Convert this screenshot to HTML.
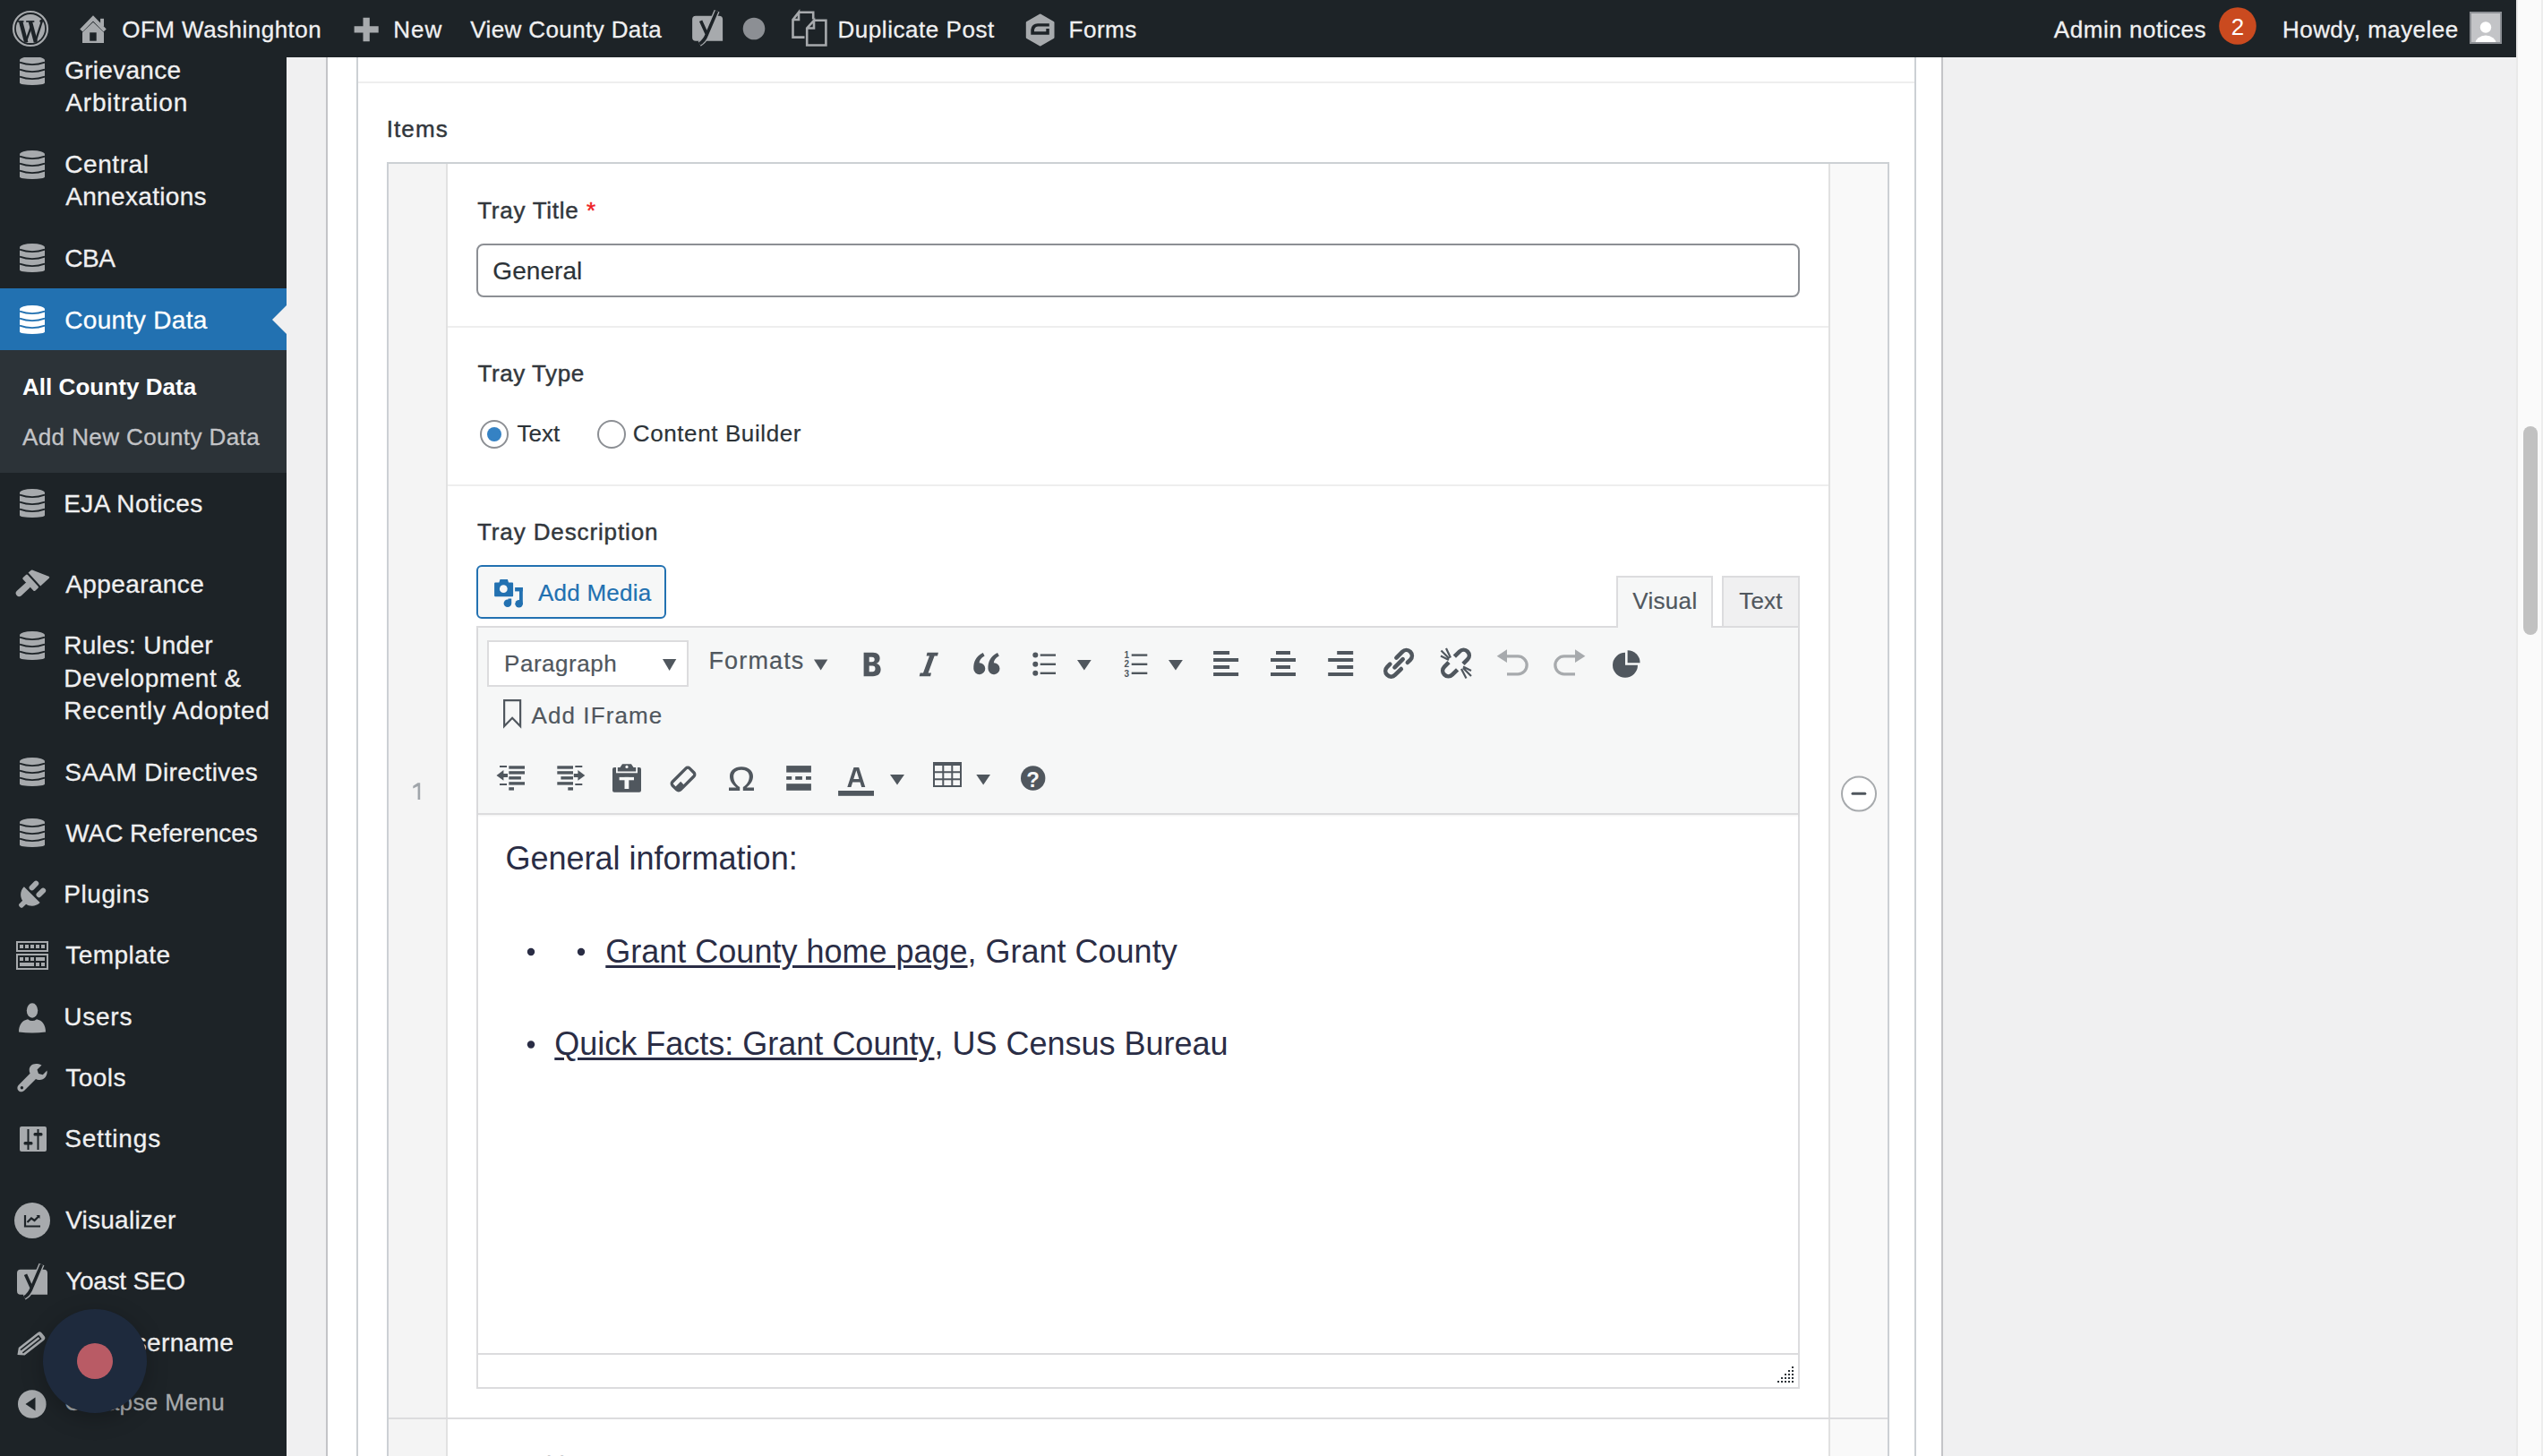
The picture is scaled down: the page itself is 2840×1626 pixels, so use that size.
<!DOCTYPE html>
<html><head><meta charset="utf-8">
<style>
html,body{margin:0;padding:0;}
body{width:2840px;height:1626px;overflow:hidden;position:relative;background:#f0f0f1;font-family:"Liberation Sans",sans-serif;}
.a{position:absolute;box-sizing:border-box;}
.t{position:absolute;white-space:nowrap;line-height:1;}
svg{position:absolute;overflow:visible;}
</style></head><body>
<!-- scrollbar -->
<div class="a" style="left:2810px;top:0;width:30px;height:1626px;background:#fafafa;border-left:2px solid #e9e9e9;border-right:2px solid #ededed"></div>
<div class="a" style="left:2818px;top:476px;width:16px;height:233px;border-radius:8px;background:#c1c1c1"></div>

<!-- postbox -->
<div class="a" style="left:364px;top:0;width:1806px;height:1626px;background:#fff;border-left:2px solid #c3c4c7;border-right:2px solid #c3c4c7"></div>
<!-- layout borders -->
<div class="a" style="left:398px;top:0;width:1742px;height:1626px;border-left:2px solid #ccd0d4;border-right:2px solid #ccd0d4"></div>
<!-- items field border-top -->
<div class="a" style="left:400px;top:91px;width:1738px;height:2px;background:#eeeeee"></div>
<!-- repeater table -->
<div class="a" style="left:432px;top:181px;width:1678px;height:1500px;border:2px solid #ccd0d4;background:#fff"></div>
<div class="a" style="left:434px;top:183px;width:64px;height:1500px;background:#f4f4f4;border-right:2px solid #e1e1e1;width:66px"></div>
<div class="a" style="left:2042px;top:183px;width:66px;height:1500px;background:#f9f9f9;border-left:2px solid #e1e1e1"></div>
<!-- row separator -->
<div class="a" style="left:434px;top:1583px;width:1674px;height:2px;background:#dcdcde"></div>
<!-- field separators -->
<div class="a" style="left:500px;top:364px;width:1542px;height:2px;background:#eeeeee"></div>
<div class="a" style="left:500px;top:541px;width:1542px;height:2px;background:#eeeeee"></div>

<!-- input -->
<div class="a" style="left:532px;top:272px;width:1478px;height:60px;border:2px solid #8c8f94;border-radius:8px;background:#fff"></div>

<!-- radios -->
<div class="a" style="left:536px;top:469px;width:32px;height:32px;border:2px solid #8c8f94;border-radius:50%;background:#fff"></div>
<div class="a" style="left:544px;top:477px;width:16px;height:16px;border-radius:50%;background:#3582c4"></div>
<div class="a" style="left:667px;top:469px;width:32px;height:32px;border:2px solid #8c8f94;border-radius:50%;background:#fff"></div>

<!-- add media button -->
<div class="a" style="left:532px;top:631px;width:212px;height:60px;border:2px solid #2271b1;border-radius:6px;background:#f6f7f7"></div>

<!-- editor tabs -->
<div class="a" style="left:1805px;top:643px;width:108px;height:60px;border:2px solid #dcdcde;border-bottom:0;background:#f6f7f7"></div>
<div class="a" style="left:1923px;top:643px;width:87px;height:58px;border:2px solid #dcdcde;border-bottom:0;background:#f0f0f1"></div>
<!-- editor container -->
<div class="a" style="left:532px;top:699px;width:1478px;height:852px;border:2px solid #dcdcde;background:#fff"></div>
<div class="a" style="left:534px;top:701px;width:1474px;height:209px;background:#f6f7f7;border-bottom:2px solid #dcdcde;box-shadow:0 1px 2px rgba(0,0,0,.06)"></div>
<div class="a" style="left:1807px;top:699px;width:104px;height:4px;background:#f6f7f7"></div>
<!-- paragraph select -->
<div class="a" style="left:544px;top:715px;width:225px;height:52px;border:2px solid #dcdcde;background:#fff"></div>
<!-- status bar -->
<div class="a" style="left:534px;top:1511px;width:1474px;height:2px;background:#dcdcde"></div>

<svg style="left:548px;top:642px" width="40" height="40" viewBox="548 642 40 40"><g fill="#2271b1"><path d="M552.1,651.5Q552.1,650.5 553.1,650.5H557.4L558.5,647.1H566.9L568,650.5H572.1Q573.1,650.5 573.1,651.5V665.3Q573.1,666.3 572.1,666.3H553.1Q552.1,666.3 552.1,665.3Z"/><rect x="575.1" y="656" width="8.7" height="4.4"/><rect x="580" y="656" width="3.8" height="19"/><circle cx="579.6" cy="674.3" r="4.3"/><circle cx="566.9" cy="673.7" r="4.3"/><rect x="567.5" y="668.5" width="3.7" height="5"/></g><circle cx="562.3" cy="657.7" r="4.4" fill="#f6f7f7"/></svg>
<svg style="left:0px;top:0px" width="2840" height="1626" viewBox="0 0 2840 1626"><path fill="#50575e" d="M740,736H755.3L747.65,749Z"/><path fill="#50575e" d="M909,736.5H924.3L916.65,748.5Z"/><path fill="#50575e" fill-rule="evenodd" d="M964.6,728.8H975C980.5,728.8 982.6,731.8 982.6,735.3C982.6,738.3 981,740.3 978.5,740.9C981.8,741.4 983.6,744 983.6,747.6C983.6,752.5 980.5,755.2 975,755.2H964.6ZM970.7,733.8V739.3H973.8C975.8,739.3 976.7,738.3 976.7,736.6C976.7,734.8 975.8,733.8 973.8,733.8ZM970.7,743.5V750.2H974.3C976.4,750.2 977.5,749.1 977.5,746.8C977.5,744.6 976.4,743.5 974.3,743.5Z"/><path fill="#50575e" d="M1035.5,728.8H1047.9L1047,732.5H1043.6L1036.6,751.5H1040L1039.1,755.2H1026.7L1027.6,751.5H1031L1038,732.5H1034.6Z"/><path fill="#50575e" d="M1087.3,747 C1087,739 1090,733 1097.8,729.1 L1099.6,732.4 C1095.5,734.8 1093.8,737.2 1093.6,740.2 A6.5,6.5 0 1 1 1087.3,747 Z"/><path fill="#50575e" d="M1103.5,747 C1103.2,739 1106.2,733 1114.0,729.1 L1115.8,732.4 C1111.7,734.8 1110.0,737.2 1109.8,740.2 A6.5,6.5 0 1 1 1103.5,747 Z"/><g fill="#50575e"><circle cx="1156.3" cy="731.6" r="3"/><circle cx="1156.3" cy="741.8" r="3"/><circle cx="1156.3" cy="751.8" r="3"/><rect x="1161.7" y="730.4" width="17.3" height="2.4"/><rect x="1161.7" y="740.6" width="17.3" height="2.4"/><rect x="1161.7" y="750.6" width="17.3" height="2.4"/></g><path fill="#50575e" d="M1203,737H1218.7L1210.85,748.4Z"/><g fill="#50575e"><rect x="1263.7" y="730.4" width="17.6" height="2.4"/><rect x="1263.7" y="740.6" width="17.6" height="2.4"/><rect x="1263.7" y="750.6" width="17.6" height="2.4"/></g><g font-family="Liberation Sans" font-size="10" font-weight="bold" fill="#50575e"><text x="1255.5" y="735">1</text><text x="1255.5" y="745.3">2</text><text x="1255.5" y="755.5">3</text></g><path fill="#50575e" d="M1305,737H1320.9L1312.95,748.4Z"/><g fill="#50575e"><rect x="1355.1" y="727" width="18" height="4"/><rect x="1355.1" y="735" width="28" height="4"/><rect x="1355.1" y="743" width="18" height="4"/><rect x="1355.1" y="751" width="28" height="4"/></g><g fill="#50575e"><rect x="1425" y="727" width="16" height="4"/><rect x="1419" y="735" width="28" height="4"/><rect x="1425" y="743" width="16" height="4"/><rect x="1419" y="751" width="28" height="4"/></g><g fill="#50575e"><rect x="1493.2" y="727" width="18" height="4"/><rect x="1483.2" y="735" width="28" height="4"/><rect x="1493.2" y="743" width="18" height="4"/><rect x="1483.2" y="751" width="28" height="4"/></g><g transform="translate(1562.1,740.8) rotate(-45)" fill="none" stroke="#50575e" stroke-width="4.6" stroke-linecap="round"><path d="M2.5,-6.3H12A6.3,6.3 0 0 1 12,6.3H7.5"/><path d="M-2.5,6.3H-12A6.3,6.3 0 0 1 -12,-6.3H-7.5"/><path d="M-6.5,0H6.5"/></g><g transform="translate(1626,740.5) rotate(-45)" fill="none" stroke="#50575e" stroke-width="4.6" stroke-linecap="butt"><path d="M4,-6.3H12A6.3,6.3 0 0 1 12,6.3H5"/><path d="M-4,6.3H-12A6.3,6.3 0 0 1 -12,-6.3H-5"/></g><g stroke="#50575e" stroke-width="2.2"><path d="M1609.5,726.5L1618.5,735.5M1615,724L1620,734.5M1609,732.5L1618,737M1643,755L1634,746M1637.5,757.5L1632,747M1643,749L1634,744.5"/></g><g fill="none" stroke="#a7aaad" stroke-width="3.3"><path d="M1682,732.9H1695.2A9.9,9.9 0 0 1 1695.2,752.8H1683"/><path d="M1760,732.9H1746.8A9.9,9.9 0 0 0 1746.8,752.8H1759"/></g><g fill="#a7aaad"><path d="M1671.7,732.7L1683,725.3V740.1Z"/><path d="M1770.4,732.7L1759,725.3V740.1Z"/></g><g fill="#50575e"><path d="M1815,742.8V728.8A14,14 0 1 0 1829,742.8Z"/><path d="M1817.6,740.2V726.2A14,14 0 0 1 1831.6,740.2Z"/></g><path fill="none" stroke="#50575e" stroke-width="2.2" d="M563.1,782.2H581.1V811L572.1,801.8L563.1,811Z"/><g fill="#50575e"><rect x="558.0" y="855" width="8" height="2"/><rect x="568.3" y="855.3" width="17.7" height="3.4"/><rect x="568.3" y="861.2" width="17.7" height="3.4"/><rect x="568.3" y="867.1" width="13.6" height="3.4"/><rect x="568.3" y="873.2" width="17.7" height="3.4"/><rect x="558.0" y="875" width="8" height="2"/><rect x="568.3" y="879.2" width="5.7" height="3.4"/><path d="M554.5,865.9L562.4,860V863.9H567.0V867.9H562.4V871.8Z"/></g><g fill="#50575e"><rect x="622.3" y="855.3" width="17.7" height="3.4"/><rect x="622.3" y="861.2" width="17.7" height="3.4"/><rect x="626.4" y="867.1" width="13.6" height="3.4"/><rect x="622.3" y="873.2" width="17.7" height="3.4"/><rect x="642.3" y="855" width="8" height="2"/><rect x="642.3" y="875" width="8" height="2"/><rect x="634.3" y="879.2" width="5.7" height="3.4"/><path d="M653.3,865.9L645.4,860V863.9H640.8V867.9H645.4V871.8Z"/></g><path fill="#50575e" d="M686,857H692.5L695,853.2H705L707.5,857H714Q716,857 716,859V882.8Q716,884.8 714,884.8H686Q684,884.8 684,882.8V859Q684,857 686,857Z"/><g fill="#f6f7f7"><rect x="688" y="861.5" width="24" height="1.8"/><rect x="688" y="857" width="1.8" height="5.5"/><rect x="710.2" y="857" width="1.8" height="5.5"/><circle cx="700" cy="856.4" r="1.6"/><rect x="691.6" y="867.9" width="16.4" height="3.4"/><rect x="697.5" y="867.9" width="4.8" height="13.1"/></g><g transform="translate(763,870) rotate(-45)"><rect x="-13.5" y="-6.3" width="27" height="12.6" rx="3" fill="none" stroke="#50575e" stroke-width="3.4"/><path d="M-13.5,0H-4V6.3H-10.5Q-13.5,6.3 -13.5,3.3Z" fill="#50575e"/></g><path fill="#50575e" d="M814,883V879.4H822.3C817.3,876 815,871.5 815,866.8C815,860.5 820.3,856.2 828,856.2C835.7,856.2 841,860.5 841,866.8C841,871.5 838.7,876 833.7,879.4H842V883H829.8V879C834,876.3 836.8,872.3 836.8,867.3C836.8,862.7 833.4,859.8 828,859.8C822.6,859.8 819.2,862.7 819.2,867.3C819.2,872.3 822,876.3 826.2,879V883Z"/><g fill="#50575e"><rect x="878.2" y="855.1" width="27.7" height="7.5"/><rect x="878.2" y="867" width="6" height="3.8"/><rect x="888.2" y="867" width="7.7" height="3.8"/><rect x="900" y="867" width="5.9" height="3.8"/><rect x="878.2" y="875.2" width="27.7" height="7.6"/></g><path fill="#50575e" d="M953.5,857H959.2L966.3,879H962.2L960.5,873.5H952.2L950.5,879H946.3ZM953.3,869.9H959.4L956.35,860.3Z"/><rect x="936.1" y="883" width="39.9" height="5.8" fill="#50575e"/><path fill="#50575e" d="M994,865H1010L1002.0,876.5Z"/><g fill="none" stroke="#50575e" stroke-width="2"><rect x="1043" y="852" width="30" height="26"/><path d="M1053.3,855V878M1063.3,855V878M1043,862.2H1073M1043,870.2H1073"/></g><rect x="1042" y="851" width="32" height="4" fill="#50575e"/><path fill="#50575e" d="M1090.3,865H1106L1098.15,876.5Z"/><circle cx="1153.7" cy="869" r="13.7" fill="#50575e"/><text x="1153.7" y="878.5" text-anchor="middle" font-family="Liberation Sans" font-weight="bold" font-size="24" fill="#f6f7f7">?</text><g fill="#2c3338"><rect x="2001" y="1526" width="2" height="2"/><rect x="1997" y="1530" width="2" height="2"/><rect x="2001" y="1530" width="2" height="2"/><rect x="1993" y="1534" width="2" height="2"/><rect x="1997" y="1534" width="2" height="2"/><rect x="2001" y="1534" width="2" height="2"/><rect x="1989" y="1538" width="2" height="2"/><rect x="1993" y="1538" width="2" height="2"/><rect x="1997" y="1538" width="2" height="2"/><rect x="2001" y="1538" width="2" height="2"/><rect x="1985" y="1542" width="2" height="2"/><rect x="1989" y="1542" width="2" height="2"/><rect x="1993" y="1542" width="2" height="2"/><rect x="1997" y="1542" width="2" height="2"/><rect x="2001" y="1542" width="2" height="2"/></g><circle cx="2076" cy="886.6" r="19" fill="#fff" stroke="#a7aaad" stroke-width="2"/><rect x="2067.5" y="884.7" width="16.8" height="3" rx="1.5" fill="#50575e"/><path fill="#a0a5aa" d="M466.6,874.3H469.2V892.9H466.6V877.9L461.3,880.6V877.8Z"/><g fill="#2a2d45"><circle cx="593" cy="1063" r="4.2"/><circle cx="649" cy="1063" r="4.2"/><circle cx="593" cy="1166.5" r="4.2"/></g></svg>
<div class="t" style="left:431.75px;top:130.80px;font-size:26px;color:#32373c;letter-spacing:1.08px;-webkit-text-stroke:0.45px currentColor;">Items</div>
<div class="t" style="left:533.20px;top:221.50px;font-size:26px;color:#32373c;letter-spacing:0.73px;-webkit-text-stroke:0.45px currentColor;">Tray Title</div>
<div class="t" style="left:655.00px;top:221.50px;font-size:26px;color:#ee1c25;-webkit-text-stroke:0.45px currentColor;">*</div>
<div class="t" style="left:550.30px;top:288.50px;font-size:28px;color:#2c3338;letter-spacing:0.07px;-webkit-text-stroke:0.2px currentColor;">General</div>
<div class="t" style="left:533.40px;top:404.20px;font-size:26px;color:#32373c;letter-spacing:0.58px;-webkit-text-stroke:0.45px currentColor;">Tray Type</div>
<div class="t" style="left:577.50px;top:471.20px;font-size:26px;color:#2c3338;letter-spacing:0.01px;-webkit-text-stroke:0.2px currentColor;">Text</div>
<div class="t" style="left:706.80px;top:471.20px;font-size:26px;color:#2c3338;letter-spacing:0.60px;-webkit-text-stroke:0.2px currentColor;">Content Builder</div>
<div class="t" style="left:533.00px;top:581.00px;font-size:26px;color:#32373c;letter-spacing:0.88px;-webkit-text-stroke:0.45px currentColor;">Tray Description</div>
<div class="t" style="left:601.00px;top:649.40px;font-size:26px;color:#2271b1;letter-spacing:0.23px;-webkit-text-stroke:0.2px currentColor;">Add Media</div>
<div class="t" style="left:1823.20px;top:658.00px;font-size:26px;color:#50575e;letter-spacing:0.33px;-webkit-text-stroke:0.2px currentColor;">Visual</div>
<div class="t" style="left:1942.30px;top:658.00px;font-size:26px;color:#50575e;letter-spacing:0.18px;-webkit-text-stroke:0.2px currentColor;">Text</div>
<div class="t" style="left:563.10px;top:727.80px;font-size:26px;color:#50575e;letter-spacing:0.51px;-webkit-text-stroke:0.2px currentColor;">Paragraph</div>
<div class="t" style="left:791.50px;top:725.10px;font-size:27px;color:#50575e;letter-spacing:1.13px;-webkit-text-stroke:0.2px currentColor;">Formats</div>
<div class="t" style="left:593.50px;top:786.00px;font-size:26px;color:#50575e;letter-spacing:1.09px;-webkit-text-stroke:0.2px currentColor;">Add IFrame</div>
<div class="t" style="left:533.20px;top:1623.00px;font-size:26px;color:#32373c;letter-spacing:0.73px;-webkit-text-stroke:0.45px currentColor;">Tray Title</div>
<div class="t" style="left:564.50px;top:940.50px;font-size:36px;color:#2a2d45;">General information:</div>
<div class="t" style="left:676.30px;top:1044.50px;font-size:36px;color:#2a2d45;text-decoration:underline;text-decoration-thickness:3px;text-underline-offset:3px;">Grant County home page</div>
<div class="t" style="left:1080.54px;top:1044.50px;font-size:36px;color:#2a2d45;">, Grant County</div>
<div class="t" style="left:619.30px;top:1148.00px;font-size:36px;color:#2a2d45;text-decoration:underline;text-decoration-thickness:3px;text-underline-offset:3px;">Quick Facts: Grant County</div>
<div class="t" style="left:1043.44px;top:1148.00px;font-size:36px;color:#2a2d45;">, US Census Bureau</div>
<!-- ============ SIDEBAR ============ -->
<div class="a" style="left:0;top:64px;width:320px;height:1562px;background:#1d2327"></div>
<div class="a" style="left:0;top:322px;width:320px;height:69px;background:#2271b1"></div>
<div class="a" style="left:0;top:391px;width:320px;height:137px;background:#2c3338"></div>
<svg style="left:304px;top:341px" width="16" height="32" viewBox="0 0 16 32"><path d="M16 0L0 16L16 32Z" fill="#f0f0f1"/></svg>

<svg style="left:22px;top:62.6px" width="28" height="32" viewBox="0 0 28 32"><path fill="#a7aaad" d="M0 4.5A14 4.5 0 0 1 28 4.5V29.5A14 2.6 0 0 1 0 29.5Z"/><path fill="none" stroke="#1d2327" stroke-width="1.7" d="M0 6.6Q14 11.6 28 6.6M0 14.6Q14 19.6 28 14.6M0 22.6Q14 27.6 28 22.6"/></svg>
<svg style="left:22px;top:167.7px" width="28" height="32" viewBox="0 0 28 32"><path fill="#a7aaad" d="M0 4.5A14 4.5 0 0 1 28 4.5V29.5A14 2.6 0 0 1 0 29.5Z"/><path fill="none" stroke="#1d2327" stroke-width="1.7" d="M0 6.6Q14 11.6 28 6.6M0 14.6Q14 19.6 28 14.6M0 22.6Q14 27.6 28 22.6"/></svg>
<svg style="left:22px;top:272.2px" width="28" height="32" viewBox="0 0 28 32"><path fill="#a7aaad" d="M0 4.5A14 4.5 0 0 1 28 4.5V29.5A14 2.6 0 0 1 0 29.5Z"/><path fill="none" stroke="#1d2327" stroke-width="1.7" d="M0 6.6Q14 11.6 28 6.6M0 14.6Q14 19.6 28 14.6M0 22.6Q14 27.6 28 22.6"/></svg>
<svg style="left:22px;top:546.2px" width="28" height="32" viewBox="0 0 28 32"><path fill="#a7aaad" d="M0 4.5A14 4.5 0 0 1 28 4.5V29.5A14 2.6 0 0 1 0 29.5Z"/><path fill="none" stroke="#1d2327" stroke-width="1.7" d="M0 6.6Q14 11.6 28 6.6M0 14.6Q14 19.6 28 14.6M0 22.6Q14 27.6 28 22.6"/></svg>
<svg style="left:22px;top:704.9px" width="28" height="32" viewBox="0 0 28 32"><path fill="#a7aaad" d="M0 4.5A14 4.5 0 0 1 28 4.5V29.5A14 2.6 0 0 1 0 29.5Z"/><path fill="none" stroke="#1d2327" stroke-width="1.7" d="M0 6.6Q14 11.6 28 6.6M0 14.6Q14 19.6 28 14.6M0 22.6Q14 27.6 28 22.6"/></svg>
<svg style="left:22px;top:846.3px" width="28" height="32" viewBox="0 0 28 32"><path fill="#a7aaad" d="M0 4.5A14 4.5 0 0 1 28 4.5V29.5A14 2.6 0 0 1 0 29.5Z"/><path fill="none" stroke="#1d2327" stroke-width="1.7" d="M0 6.6Q14 11.6 28 6.6M0 14.6Q14 19.6 28 14.6M0 22.6Q14 27.6 28 22.6"/></svg>
<svg style="left:22px;top:914px" width="28" height="32" viewBox="0 0 28 32"><path fill="#a7aaad" d="M0 4.5A14 4.5 0 0 1 28 4.5V29.5A14 2.6 0 0 1 0 29.5Z"/><path fill="none" stroke="#1d2327" stroke-width="1.7" d="M0 6.6Q14 11.6 28 6.6M0 14.6Q14 19.6 28 14.6M0 22.6Q14 27.6 28 22.6"/></svg>
<svg style="left:22px;top:340.7px" width="28" height="32" viewBox="0 0 28 32"><path fill="#ffffff" d="M0 4.5A14 4.5 0 0 1 28 4.5V29.5A14 2.6 0 0 1 0 29.5Z"/><path fill="none" stroke="#2271b1" stroke-width="1.7" d="M0 6.6Q14 11.6 28 6.6M0 14.6Q14 19.6 28 14.6M0 22.6Q14 27.6 28 22.6"/></svg>
<svg style="left:12px;top:630px" width="50" height="42" viewBox="12 630 50 42"><g transform="translate(37.5,647.7) rotate(47.5)" fill="#a7aaad"><path d="M-10,-1.1V-4.3Q-10,-6.6 -7.4,-7.3L8.6,-15.3Q10.2,-15.8 10.2,-14V-1.1Z"/><rect x="-10" y="1" width="20" height="7.2" rx="1.4"/><rect x="-3.6" y="6" width="7.2" height="19.5" rx="3.6"/></g></svg>
<svg style="left:14px;top:978px" width="44" height="42" viewBox="14 978 44 42"><g transform="translate(36.75,998.1) rotate(45)" fill="#a7aaad"><path d="M-12.6,1.4H12.6C12.6,9 6.5,13 2.8,13.6V19.5Q0,22 -2.8,19.5V13.6C-6.5,13 -12.6,9 -12.6,1.4Z"/><rect x="-8.6" y="-13.5" width="6" height="12.5" rx="3"/><rect x="2.6" y="-13.5" width="6" height="12.5" rx="3"/></g></svg>
<svg style="left:14px;top:1046px" width="44" height="42" viewBox="14 1046 44 42"><g fill="none" stroke="#a7aaad" stroke-width="2"><rect x="19" y="1052" width="34" height="10"/><rect x="19" y="1066" width="34" height="16"/></g><g fill="#a7aaad"><rect x="22" y="1055" width="4" height="4"/><rect x="28" y="1055" width="4" height="4"/><rect x="34" y="1055" width="4" height="4"/><rect x="40" y="1055" width="4" height="4"/><rect x="46" y="1055" width="4" height="4"/><rect x="22" y="1069" width="4" height="4"/><rect x="28" y="1069" width="4" height="4"/><rect x="34" y="1069" width="4" height="4"/><rect x="40" y="1069" width="10" height="4"/><rect x="22" y="1075" width="16" height="4"/><rect x="46" y="1075" width="4" height="4"/><rect x="40" y="1075" width="4" height="4"/></g></svg>
<svg style="left:14px;top:1116px" width="44" height="40" viewBox="14 1116 44 40"><g fill="#a7aaad"><ellipse cx="36" cy="1128.5" rx="6.2" ry="8.3"/><path d="M21,1152.5C21,1144 25,1139.5 31,1138.2Q36,1142 41,1138.2C47,1139.5 51,1144 51,1152.5Q36,1154.5 21,1152.5Z"/></g></svg>
<svg style="left:14px;top:1184px" width="44" height="40" viewBox="14 1184 44 40"><g fill="#a7aaad"><path d="M46.5,1189.5L41.5,1194.5L43,1199L47.8,1200.2L52.5,1195.5C53.5,1201.5 49,1206.5 43.5,1206C42.2,1205.9 41,1205.5 40,1205L27.5,1217.5C25.5,1219.8 22.2,1219.8 20.6,1218C18.8,1216.2 19,1213.2 21,1211.4L33.6,1198.8C33,1197.6 32.7,1196.4 32.7,1195C32.7,1189.3 38.5,1186 46.5,1189.5Z"/></g><circle cx="24.4" cy="1214.8" r="1.7" fill="#1d2327"/></svg>
<svg style="left:14px;top:1254px" width="44" height="36" viewBox="14 1254 44 36"><rect x="22" y="1258" width="30" height="28" rx="2" fill="#a7aaad"/><g fill="#1d2327"><rect x="30.5" y="1261" width="2" height="23"/><rect x="41.5" y="1261" width="2" height="23"/><rect x="26.5" y="1275" width="10" height="3.5" rx="1.5"/><rect x="37.5" y="1265" width="10" height="3.5" rx="1.5"/></g></svg>
<svg style="left:14px;top:1341px" width="44" height="44" viewBox="14 1341 44 44"><circle cx="36" cy="1363" r="20" fill="#a7aaad"/><g fill="none" stroke="#1d2327" stroke-width="2.2"><path d="M28,1357V1369.5H45"/><path d="M30.5,1365L35,1360.5L38.5,1363L43.5,1358"/></g><path d="M40.5,1357H44.5V1361Z" fill="#1d2327"/></svg>
<svg style="left:12px;top:1404px" width="48" height="52" viewBox="12 1404 48 52"><g transform="translate(-754.1,1399.9)"><path fill="#a7aaad" d="M777,17.8H803.1Q807.1,17.8 807.1,21.8V45.8H777Q773.1,45.8 773.1,41.8V21.8Q773.1,17.8 777,17.8Z"/><path fill="none" stroke="#a7aaad" stroke-width="6.4" d="M800.6,12.2L789.6,38Q786.6,46 781.2,48.8"/><path fill="none" stroke="#1d2327" stroke-width="3.6" d="M800.6,12.2L789.6,38Q786.6,46 781.2,48.8M782.6,23.3L789.2,37.8"/></g></svg>
<svg style="left:14px;top:1482px" width="44" height="36" viewBox="14 1482 44 36"><g transform="translate(36,1500) rotate(-38)"><path fill="#a7aaad" d="M-15,-5.5H12Q15.5,-5.5 15.5,-2V2Q15.5,5.5 12,5.5H-15L-21,0Z"/><path fill="none" stroke="#1d2327" stroke-width="1.6" d="M-15,-2H10.5V2H-15"/></g></svg>
<svg style="left:14px;top:1548px" width="44" height="40" viewBox="14 1548 44 40"><circle cx="35.8" cy="1568" r="15.8" fill="#a7aaad"/><path d="M28.5,1568L39.5,1560.5V1575.5Z" fill="#1d2327"/></svg>
<div class="t" style="left:72.20px;top:65.10px;font-size:28px;color:#f0f0f1;letter-spacing:0.28px;-webkit-text-stroke:0.3px currentColor;">Grievance</div>
<div class="t" style="left:73.20px;top:101.30px;font-size:28px;color:#f0f0f1;letter-spacing:0.85px;-webkit-text-stroke:0.3px currentColor;">Arbitration</div>
<div class="t" style="left:72.20px;top:170.20px;font-size:28px;color:#f0f0f1;letter-spacing:0.58px;-webkit-text-stroke:0.3px currentColor;">Central</div>
<div class="t" style="left:73.20px;top:206.20px;font-size:28px;color:#f0f0f1;letter-spacing:0.33px;-webkit-text-stroke:0.3px currentColor;">Annexations</div>
<div class="t" style="left:72.20px;top:274.70px;font-size:28px;color:#f0f0f1;letter-spacing:-0.45px;-webkit-text-stroke:0.3px currentColor;">CBA</div>
<div class="t" style="left:72.20px;top:343.50px;font-size:28px;color:#ffffff;letter-spacing:0.35px;-webkit-text-stroke:0.3px currentColor;">County Data</div>
<div class="t" style="left:25.00px;top:419.00px;font-size:26px;color:#ffffff;font-weight:700;letter-spacing:0.04px;">All County Data</div>
<div class="t" style="left:25.00px;top:475.30px;font-size:26px;color:#c3c4c7;letter-spacing:0.41px;-webkit-text-stroke:0.3px currentColor;">Add New County Data</div>
<div class="t" style="left:71.20px;top:548.70px;font-size:28px;color:#f0f0f1;letter-spacing:0.40px;-webkit-text-stroke:0.3px currentColor;">EJA Notices</div>
<div class="t" style="left:73.20px;top:639.40px;font-size:28px;color:#f0f0f1;letter-spacing:0.40px;-webkit-text-stroke:0.3px currentColor;">Appearance</div>
<div class="t" style="left:71.20px;top:707.40px;font-size:28px;color:#f0f0f1;letter-spacing:0.27px;-webkit-text-stroke:0.3px currentColor;">Rules: Under</div>
<div class="t" style="left:71.20px;top:743.50px;font-size:28px;color:#f0f0f1;letter-spacing:0.55px;-webkit-text-stroke:0.3px currentColor;">Development &amp;</div>
<div class="t" style="left:71.20px;top:779.50px;font-size:28px;color:#f0f0f1;letter-spacing:0.68px;-webkit-text-stroke:0.3px currentColor;">Recently Adopted</div>
<div class="t" style="left:72.20px;top:848.80px;font-size:28px;color:#f0f0f1;letter-spacing:0.39px;-webkit-text-stroke:0.3px currentColor;">SAAM Directives</div>
<div class="t" style="left:73.20px;top:916.50px;font-size:28px;color:#f0f0f1;letter-spacing:-0.06px;-webkit-text-stroke:0.3px currentColor;">WAC References</div>
<div class="t" style="left:71.20px;top:985.20px;font-size:28px;color:#f0f0f1;letter-spacing:0.59px;-webkit-text-stroke:0.3px currentColor;">Plugins</div>
<div class="t" style="left:73.20px;top:1053.10px;font-size:28px;color:#f0f0f1;letter-spacing:0.48px;-webkit-text-stroke:0.3px currentColor;">Template</div>
<div class="t" style="left:71.20px;top:1121.90px;font-size:28px;color:#f0f0f1;letter-spacing:0.77px;-webkit-text-stroke:0.3px currentColor;">Users</div>
<div class="t" style="left:73.20px;top:1189.70px;font-size:28px;color:#f0f0f1;letter-spacing:0.51px;-webkit-text-stroke:0.3px currentColor;">Tools</div>
<div class="t" style="left:72.20px;top:1257.50px;font-size:28px;color:#f0f0f1;letter-spacing:0.83px;-webkit-text-stroke:0.3px currentColor;">Settings</div>
<div class="t" style="left:73.20px;top:1349.00px;font-size:28px;color:#f0f0f1;letter-spacing:0.24px;-webkit-text-stroke:0.3px currentColor;">Visualizer</div>
<div class="t" style="left:73.20px;top:1417.30px;font-size:28px;color:#f0f0f1;letter-spacing:-0.27px;-webkit-text-stroke:0.3px currentColor;">Yoast SEO</div>
<div class="t" style="left:71.20px;top:1486.20px;font-size:28px;color:#f0f0f1;letter-spacing:0.37px;-webkit-text-stroke:0.3px currentColor;">Edit Username</div>
<div class="t" style="left:72.20px;top:1552.60px;font-size:26px;color:#a7aaad;letter-spacing:0.42px;-webkit-text-stroke:0.3px currentColor;">Collapse Menu</div>
<!-- ============ ADMIN BAR ============ -->
<div class="a" style="left:0;top:0;width:2810px;height:64px;background:#1d2327"></div>
<svg style="left:12px;top:10px" width="44" height="44" viewBox="12 10 44 44"><circle cx="34" cy="32" r="19" fill="none" stroke="#a7aaad" stroke-width="2.2"/><circle cx="34" cy="32" r="16.1" fill="#a7aaad"/><clipPath id="wpc"><circle cx="34" cy="32" r="16.1"/></clipPath><g clip-path="url(#wpc)" fill="none" stroke="#1d2327"><path d="M23.2,24.3L29.3,47.5M33.9,24.3L40,47.5" stroke-width="4.4"/><path d="M28.6,47.2L34.6,30.5M39.3,47.2L46.6,24.5" stroke-width="2.3"/></g><g fill="#1d2327"><rect x="19.6" y="23.1" width="6.9" height="1.7"/><rect x="29.2" y="23.1" width="9.1" height="1.7"/><circle cx="46.2" cy="23.6" r="1.9"/></g></svg>
<svg style="left:84px;top:12px" width="40" height="40" viewBox="84 12 40 40"><path fill="none" stroke="#a7aaad" stroke-width="4.4" d="M90.8,34L104,20.4L117.2,34"/><rect x="112.1" y="20.8" width="3.9" height="8.5" fill="#a7aaad"/><path fill="#a7aaad" d="M92,36.3L104,24.8L116,36.3V48H92Z"/><rect x="100.2" y="36.3" width="7.5" height="9.4" fill="#1d2327"/></svg>
<svg style="left:390px;top:14px" width="40" height="38" viewBox="390 14 40 38"><path fill="#a7aaad" d="M405.5,19.7H412.8V29.3H422.7V36.6H412.8V46.2H405.5V36.6H395.6V29.3H405.5Z"/></svg>
<svg style="left:766px;top:6px" width="48" height="50" viewBox="766 6 48 50"><g transform="translate(0,0)"><path fill="#a7aaad" d="M777,17.8H803.1Q807.1,17.8 807.1,21.8V45.8H777Q773.1,45.8 773.1,41.8V21.8Q773.1,17.8 777,17.8Z"/><path fill="none" stroke="#a7aaad" stroke-width="6.4" d="M800.6,12.2L789.6,38Q786.6,46 781.2,48.8"/><path fill="none" stroke="#1d2327" stroke-width="3.6" d="M800.6,12.2L789.6,38Q786.6,46 781.2,48.8M782.6,23.3L789.2,37.8"/></g></svg>
<svg style="left:826px;top:16px" width="32" height="32" viewBox="826 16 32 32"><circle cx="842" cy="32" r="12.3" fill="#8c8f94"/></svg>
<svg style="left:880px;top:8px" width="48" height="48" viewBox="880 8 48 48"><g fill="none" stroke="#a7aaad" stroke-width="2.6" stroke-linejoin="miter"><path d="M892,13.8H908.2V21.5M898.5,41.6H885.5V22L892,13.8V22H885.5"/><path d="M909,22.8H922.4V50.5H901.2V31.5L909,22.8V31.5H901.2"/></g></svg>
<svg style="left:1140px;top:12px" width="44" height="44" viewBox="1140 12 44 44"><path fill="#a7aaad" stroke="#a7aaad" stroke-width="3" stroke-linejoin="round" d="M1161.7,17L1176,25.2V41.8L1161.7,50L1147.3,41.8V25.2Z"/><path fill="#1d2327" d="M1171.8,26.3H1159Q1152.3,26.3 1151.3,33V38.8H1171.8V32.1H1168.3V35.3H1155V33.5Q1155.8,29.6 1159.5,29.6H1171.8Z"/></svg>
<svg style="left:2474px;top:4px" width="52" height="52" viewBox="2474 4 52 52"><circle cx="2499" cy="29" r="20.8" fill="#ca4a1f"/><text x="2499" y="38.5" text-anchor="middle" font-family="Liberation Sans" font-size="26" fill="#fff">2</text></svg>
<svg style="left:2754px;top:9px" width="44" height="44" viewBox="2754 9 44 44"><rect x="2759" y="14" width="34" height="34" fill="#c3c4c7" stroke="#8c8f94" stroke-width="2"/><clipPath id="av"><rect x="2760" y="15" width="32" height="32"/></clipPath><g clip-path="url(#av)" fill="#fff"><circle cx="2776" cy="30.5" r="6.2"/><ellipse cx="2776" cy="48.5" rx="11.5" ry="9"/></g></svg>
<div class="t" style="left:136.20px;top:20.00px;font-size:26px;color:#f0f0f1;letter-spacing:0.48px;-webkit-text-stroke:0.3px currentColor;">OFM Washinghton</div>
<div class="t" style="left:439.20px;top:20.00px;font-size:26px;color:#f0f0f1;letter-spacing:1.03px;-webkit-text-stroke:0.3px currentColor;">New</div>
<div class="t" style="left:525.30px;top:20.00px;font-size:26px;color:#f0f0f1;letter-spacing:0.39px;-webkit-text-stroke:0.3px currentColor;">View County Data</div>
<div class="t" style="left:935.50px;top:20.00px;font-size:26px;color:#f0f0f1;letter-spacing:0.54px;-webkit-text-stroke:0.3px currentColor;">Duplicate Post</div>
<div class="t" style="left:1193.60px;top:20.00px;font-size:26px;color:#f0f0f1;letter-spacing:0.49px;-webkit-text-stroke:0.3px currentColor;">Forms</div>
<div class="t" style="left:2293.80px;top:19.60px;font-size:26px;color:#f0f0f1;letter-spacing:0.54px;-webkit-text-stroke:0.3px currentColor;">Admin notices</div>
<div class="t" style="left:2549.00px;top:19.60px;font-size:26px;color:#f0f0f1;letter-spacing:0.45px;-webkit-text-stroke:0.3px currentColor;">Howdy, mayelee</div>
<div class="a" style="left:48px;top:1461.5px;width:116px;height:116px;border-radius:50%;background:#1e2a3d;box-shadow:0 6px 24px rgba(0,0,0,.25)"></div><div class="a" style="left:86px;top:1499.5px;width:40px;height:40px;border-radius:50%;background:#b95b65"></div>
</body></html>
